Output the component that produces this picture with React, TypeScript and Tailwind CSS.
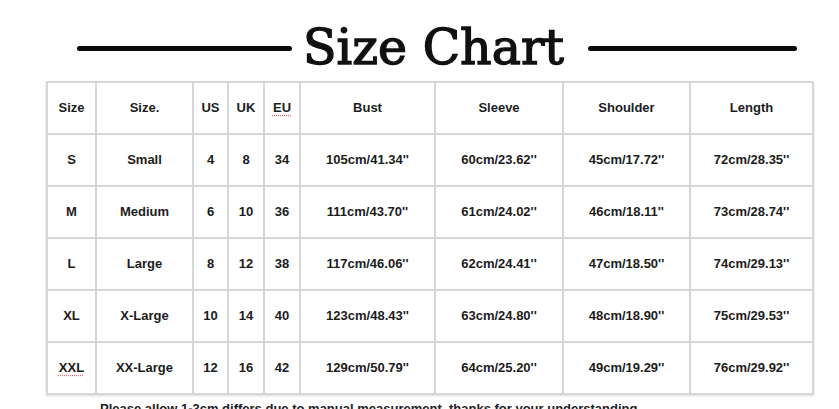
import React from "react";

const cols = [47, 95, 33, 34, 34, 133, 126, 125, 121];

const header = ["Size", "Size.", "US", "UK", "EU", "Bust", "Sleeve", "Shoulder", "Length"];
const rows = [
  ["S", "Small", "4", "8", "34", "105cm/41.34''", "60cm/23.62''", "45cm/17.72''", "72cm/28.35''"],
  ["M", "Medium", "6", "10", "36", "111cm/43.70''", "61cm/24.02''", "46cm/18.11''", "73cm/28.74''"],
  ["L", "Large", "8", "12", "38", "117cm/46.06''", "62cm/24.41''", "47cm/18.50''", "74cm/29.13''"],
  ["XL", "X-Large", "10", "14", "40", "123cm/48.43''", "63cm/24.80''", "48cm/18.90''", "75cm/29.53''"],
  ["XXL", "XX-Large", "12", "16", "42", "129cm/50.79''", "64cm/25.20''", "49cm/19.29''", "76cm/29.92''"],
];

function Cell({ text, spell }: { text: string; spell?: boolean }) {
  return (
    <div className="bg-white h-[50px] flex items-center justify-center text-[13px] font-bold text-[#1c1c1c]">
      {spell ? (
        <span className="underline decoration-dotted decoration-[#e46a7a] underline-offset-[3px]">{text}</span>
      ) : (
        text
      )}
    </div>
  );
}

export default function App() {
  const all = [header, ...rows];
  return (
    <div
      className="w-[839px] h-[409px] overflow-hidden bg-white"
      style={{ fontFamily: '"Liberation Sans", Arial, sans-serif' }}
    >
      <div className="h-[81px] flex items-start pt-[23px]">
        <div className="ml-[77px] mt-[23px] w-[215px] h-[5px] rounded-full bg-[#0a0a0a]" />
        <div
          className="ml-[12px] w-[259px] flex justify-center text-[49px] leading-none text-[#111] whitespace-nowrap [-webkit-text-stroke:1.4px_#111]"
          style={{ fontFamily: '"DejaVu Serif", "Liberation Serif", serif' }}
        >
          Size Chart
        </div>
        <div className="ml-[25px] mt-[23px] w-[209px] h-[5px] rounded-full bg-[#0a0a0a]" />
      </div>
      <div
        className="ml-[46px] w-[768px] grid gap-[2px] p-[2px] bg-[#d6d6d6] shadow-[0_1px_2px_rgba(0,0,0,0.15)]"
        style={{ gridTemplateColumns: cols.map((c) => `${c}px`).join(" ") }}
      >
        {all.map((r, ri) =>
          r.map((t, ci) => (
            <Cell key={`${ri}-${ci}`} text={t} spell={(ri === 0 && ci === 4) || (ri === 5 && ci === 0)} />
          ))
        )}
      </div>
      <div className="mt-[7px] pl-[100px] text-[13px] leading-none font-bold text-[#222] whitespace-nowrap">
        Please allow 1-3cm differs due to manual measurement, thanks for your understanding.
      </div>
    </div>
  );
}
